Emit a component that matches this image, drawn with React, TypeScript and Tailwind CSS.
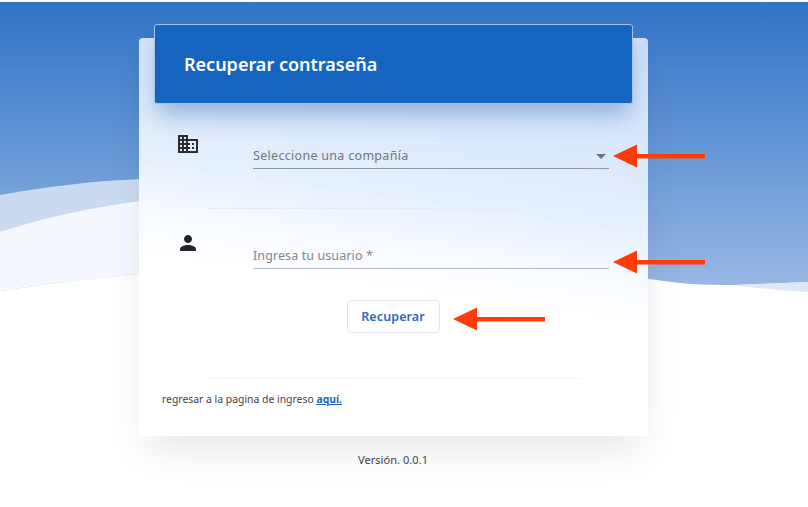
import React from 'react';

const Arrow: React.FC<{ className: string }> = ({ className }) => (
    <svg className={className} width="92" height="24" viewBox="0 0 92 24">
        <path d="M0 12 L24 0.5 V10 H92 V14.5 H24 V23.5 Z" fill="#ff3b0a" />
    </svg>
);

export default function App() {
    return (
        <div className="relative h-[507px] w-[808px] overflow-hidden bg-white font-['Noto_Sans',sans-serif]">
            {/* wave background */}
            <svg className="absolute left-0 top-0" width="808" height="320" viewBox="0 0 808 320">
                <defs>
                    <linearGradient id="sky" x1="0" y1="0" x2="0" y2="1">
                        <stop offset="0" stopColor="#3074c6" />
                        <stop offset="1" stopColor="#9ab8e4" />
                    </linearGradient>
                </defs>
                <path d="M0 2 H808 V282 C760 284 720 287 680 283 C620 276 540 262 400 262 C260 262 120 272 0 291 Z" fill="url(#sky)" />
                <path d="M0 195 C50 186 95 181 140 179 L140 274 C90 279 45 284 0 291 Z" fill="#cadaf1" />
                <path d="M0 232 C50 216 95 207 140 201 L140 274 C90 279 45 284 0 291 Z" fill="#f5f8fe" />
                <path d="M730 285 C760 284 785 283 808 282 V292 C785 291 760 288 730 285 Z" fill="#dfe8f7" />
            </svg>

            <div className="relative pl-[139px] pt-[38px]">
                {/* card */}
                <div className="h-[398px] w-[509px] rounded bg-[linear-gradient(188deg,#cfe1fa_0%,#dbe9fc_26%,#e6f0fd_41%,#f5f9ff_50%,#ffffff_62%)] shadow-[0_20px_40px_-8px_rgba(0,0,0,0.10)]">
                    <div className="relative -top-[14px] ml-[15px] flex h-[80px] w-[479px] items-center rounded-[3px] border border-[#a8c3e8] bg-[#1565c0] pl-[29px] shadow-[0_14px_24px_-4px_rgba(21,80,160,0.38)]">
                        <h1 className="text-[18px] font-semibold leading-none text-white">Recuperar contraseña</h1>
                    </div>

                    <div className="-mt-[14px] flex h-[104px] pl-[37px] pt-[28px]">
                        <svg className="shrink-0" width="24" height="24" viewBox="0 0 24 24" fill="#2b2d33">
                            <path d="M12 7V3H2v18h20V7H10zM6 19H4v-2h2v2zm0-4H4v-2h2v2zm0-4H4V9h2v2zm0-4H4V5h2v2zm4 12H8v-2h2v2zm0-4H8v-2h2v2zm0-4H8V9h2v2zm0-4H8V5h2v2zm10 12h-8v-2h2v-2h-2v-2h2v-2h-2V9h8v10zm-2-8h-2v2h2v-2zm0 4h-2v2h2v-2z" />
                        </svg>
                        <div className="ml-[53px] flex h-[37px] w-[356px] items-center justify-between border-b border-[#8e97a3] pt-[12px] pr-[3px] text-[12.5px] tracking-[0.3px] text-[#6f7680]">
                            <span>Seleccione una compañía</span>
                            <span className="h-0 w-0 border-x-[5px] border-t-[5px] border-x-transparent border-t-[#6f7680]" />
                        </div>
                    </div>

                    <div className="mx-[68px] h-px bg-[#e3edf9]" />

                    <div className="flex h-[60px] pl-[37px] pt-[23px]">
                        <svg className="-mt-px shrink-0" width="24" height="24" viewBox="0 0 24 24" fill="#22242a">
                            <path d="M12 12c2.21 0 4-1.79 4-4s-1.79-4-4-4-4 1.79-4 4 1.79 4 4 4zm0 2c-2.67 0-8 1.34-8 4v1c0 .55.45 1 1 1h14c.55 0 1-.45 1-1v-1c0-2.66-5.33-4-8-4z" />
                        </svg>
                        <div className="ml-[53px] flex h-[37px] w-[356px] items-center border-b border-[#b5b8bc] pt-[12px] text-[12.5px] tracking-[0.1px] text-[#83878d]">
                            Ingresa tu usuario *
                        </div>
                    </div>

                    <div className="mt-[31px] flex justify-center pr-[1px]">
                        <button className="flex h-[33px] w-[93px] items-center justify-center rounded border border-[#e4e7ec] bg-white pt-[2px] text-[12.5px] font-semibold tracking-[0.1px] text-[#2a6bc4]">
                            Recuperar
                        </button>
                    </div>

                    <div className="mx-[68px] mt-[45px] h-px bg-[#f0f3f8]" />

                    <p className="ml-[23px] mt-[13px] text-[10.4px] leading-[14px] text-[#3f4247]">
                        regresar a la pagina de ingreso{' '}
                        <a className="font-bold text-[#1565c0] underline">aquí.</a>
                    </p>
                </div>

                <p className="mt-[17px] w-[509px] pr-[1px] text-center text-[11px] leading-[14px] tracking-[0.05px] text-[#3f4247]">Versión. 0.0.1</p>
            </div>

            {/* annotation arrows */}
            <Arrow className="absolute left-[613px] top-[144px]" />
            <Arrow className="absolute left-[613px] top-[250px]" />
            <Arrow className="absolute left-[453px] top-[307px]" />
        </div>
    );
}
